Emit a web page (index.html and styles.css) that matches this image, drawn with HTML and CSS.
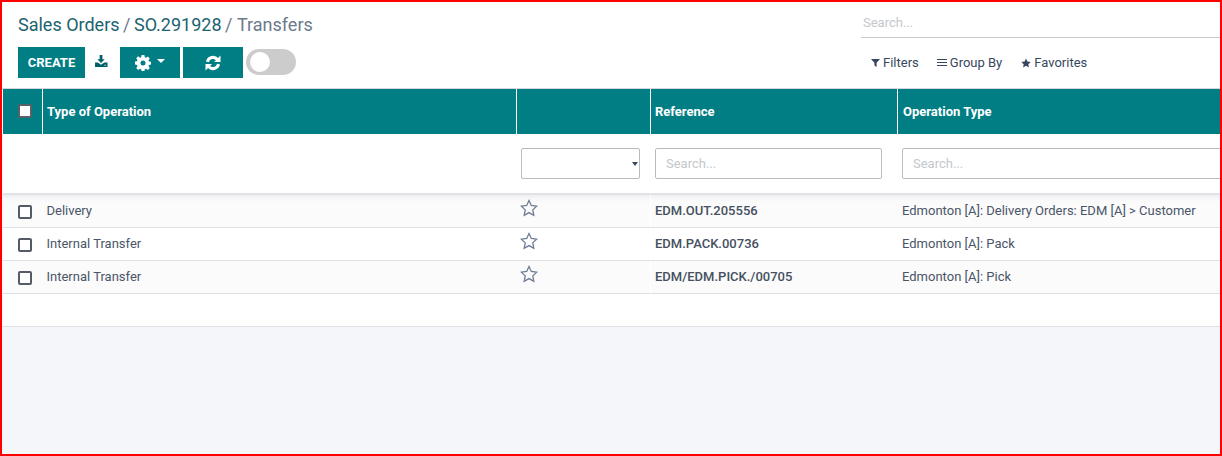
FILE: index.html
```html
<!DOCTYPE html>
<html lang="en">
<head>
<meta charset="utf-8">
<title>Transfers</title>
<link rel="stylesheet" href="styles.css">
</head>
<body>
<div class="frame">
  <header class="panel">
    <div class="panel-left">
      <h1 class="crumbs"><span class="crumb-link">Sales Orders</span> <span class="crumb-sep">/</span> <span class="crumb-link">SO.291928</span> <span class="crumb-sep">/</span> <span class="crumb-active">Transfers</span></h1>
      <div class="actions">
        <button class="btn btn-create">CREATE</button>
        <button class="icon-btn" aria-label="Import">
          <svg width="13" height="12" viewBox="0 0 14 13"><path fill="#00606a" d="M5 0h3v4.500h2.500L6.500 8.700 2.500 4.500H5zM0 8h3l3.500 2.500L10 8h3.500v5H0z"/><path fill="#fff" d="M10 10.600h2v.8h-2z"/></svg>
        </button>
        <button class="btn btn-gear" aria-label="Action">
          <svg width="16" height="16" viewBox="0 0 16 16"><path fill="#fff" fill-rule="evenodd" d="M6.600 0h2.800l.4 2.200 1.200.5L12.800 1.400l2 2-1.300 1.800.5 1.200 2 .4v2.800l-2 .4-.5 1.200 1.300 1.800-2 2-1.800-1.300-1.200.5-.4 2.200H6.600l-.4-2.200-1.200-.5-1.800 1.300-2-2 1.300-1.800-.5-1.200-2-.4V6.600l2-.4.500-1.200-1.300-1.800 2-2L5 2.700l1.200-.5zM8 5.500a2.500 2.500 0 1 0 0 5 2.500 2.500 0 0 0 0-5z"/></svg>
          <span class="caret"></span>
        </button>
        <button class="btn btn-refresh" aria-label="Refresh">
          <svg width="16" height="16" viewBox="0 0 16 16"><path fill="none" stroke="#fff" stroke-width="3" d="M2.400 6.800A5.800 5.800 0 0 1 12.400 4.400M13.600 9.200A5.800 5.800 0 0 1 3.600 11.600"/><path fill="#fff" d="M15.500 .5v6.500H9zM.5 15.500V9H7z"/></svg>
        </button>
        <span class="toggle"><span class="knob"></span></span>
      </div>
    </div>
    <div class="panel-right">
      <div class="search-box">Search...</div>
      <div class="filters">
        <span class="filter">
          <svg width="9" height="9" viewBox="0 0 9 9"><path fill="#374760" d="M0 1h9L5.600 4.700V9L3.400 7.600V4.700z"/></svg>Filters</span>
        <span class="filter">
          <svg width="10" height="9" viewBox="0 0 10 9"><path fill="#374760" d="M0 1h10v1H0zM0 4h10v1H0zM0 7h10v1H0z"/></svg>Group By</span>
        <span class="filter">
          <svg width="10" height="10" viewBox="0 0 24 24"><path fill="#374760" d="M12 1l3.400 7.300 7.900 1-5.800 5.400 1.500 7.900-7-3.900-7 3.900 1.500-7.900L.7 9.300l7.900-1z"/></svg>Favorites</span>
      </div>
    </div>
  </header>
  <div class="content">
    <table class="list">
      <colgroup>
        <col class="c-check"><col class="c-type"><col class="c-fav"><col class="c-ref"><col class="c-op">
      </colgroup>
      <thead>
        <tr class="head">
          <th class="check-cell"><span class="check check-head"></span></th>
          <th>Type of Operation</th>
          <th></th>
          <th>Reference</th>
          <th class="last">Operation Type</th>
        </tr>
        <tr class="search-row">
          <td></td>
          <td></td>
          <td><div class="field field-select"><span class="select-caret"></span></div></td>
          <td><div class="field field-ref">Search...</div></td>
          <td><div class="field field-wide">Search...</div></td>
        </tr>
      </thead>
      <tbody>
        <tr class="row odd first">
          <td class="check-cell"><span class="check"></span></td>
          <td class="type">Delivery</td>
          <td class="fav"><svg width="18" height="18" viewBox="0 0 24 24"><path fill="none" stroke="#6c7a92" stroke-width="1.700" d="M12 2l3.100 6.600 7.200.9-5.300 5 1.400 7.200-6.400-3.600-6.400 3.600L7 14.500l-5.300-5 7.200-.9z"/></svg></td>
          <td class="ref">EDM.OUT.205556</td>
          <td class="last">Edmonton [A]: Delivery Orders: EDM [A] &gt; Customer</td>
        </tr>
        <tr class="row">
          <td class="check-cell"><span class="check"></span></td>
          <td class="type">Internal Transfer</td>
          <td class="fav"><svg width="18" height="18" viewBox="0 0 24 24"><path fill="none" stroke="#6c7a92" stroke-width="1.700" d="M12 2l3.100 6.600 7.200.9-5.300 5 1.400 7.200-6.400-3.600-6.400 3.600L7 14.500l-5.300-5 7.200-.9z"/></svg></td>
          <td class="ref">EDM.PACK.00736</td>
          <td class="last">Edmonton [A]: Pack</td>
        </tr>
        <tr class="row odd">
          <td class="check-cell"><span class="check"></span></td>
          <td class="type">Internal Transfer</td>
          <td class="fav"><svg width="18" height="18" viewBox="0 0 24 24"><path fill="none" stroke="#6c7a92" stroke-width="1.700" d="M12 2l3.100 6.600 7.200.9-5.300 5 1.400 7.200-6.400-3.600-6.400 3.600L7 14.500l-5.300-5 7.200-.9z"/></svg></td>
          <td class="ref">EDM/EDM.PICK./00705</td>
          <td class="last">Edmonton [A]: Pick</td>
        </tr>
        <tr class="row empty"><td></td><td></td><td></td><td></td><td></td></tr>
      </tbody>
    </table>
  </div>
</div>
</body>
</html>
```

FILE: styles.css
```css
* { box-sizing: border-box; }
html, body { margin: 0; height: 100%; }
body { font-family: Roboto, "Noto Sans", sans-serif; color: #374760; overflow: hidden; }

.frame {
  width: 1222px;
  height: 456px;
  border: 2px solid #f00;
  background: #f5f6fa;
  display: flex;
  flex-direction: column;
  overflow: hidden;
}

.panel {
  height: 87px;
  flex: none;
  background: #fff;
  border-bottom: 1px solid #d6d6da;
  display: flex;
  justify-content: space-between;
}
.panel-left { padding: 12px 0 0 16px; }
.crumbs {
  margin: 0;
  font-size: 18px;
  font-weight: 400;
  line-height: 22px;
  height: 33px;
  white-space: nowrap;
  word-spacing: -1px;
}
.crumb-link { color: #1b6370; word-spacing: 0; }
.crumb-sep, .crumb-active { color: #6c7a8c; }
.crumb-active { margin-left: 1px; }

.actions { display: flex; align-items: flex-start; }
.btn {
  height: 31px;
  border: 0;
  padding: 0;
  background: #017e84;
  color: #fff;
  font-family: inherit;
  display: flex;
  align-items: center;
  justify-content: center;
}
.btn-create { width: 67px; font-size: 13px; font-weight: 700; }
.icon-btn {
  width: 35px;
  height: 31px;
  border: 0;
  padding: 0 2px 3px 0;
  background: none;
  display: flex;
  align-items: center;
  justify-content: center;
}
.btn-gear { width: 60px; gap: 6px; }
.btn-refresh { width: 60px; margin-left: 3px; }
.caret {
  border-left: 4px solid transparent;
  border-right: 4px solid transparent;
  border-top: 4px solid #fff;
  margin-top: -3px;
}
.toggle {
  width: 50px;
  height: 26px;
  margin: 2px 0 0 3px;
  border-radius: 13px;
  background: #ccc;
  padding: 3px 0 0 4px;
}
.knob { display: block; width: 20px; height: 20px; border-radius: 50%; background: #fff; }

.panel-right { width: 359px; padding-top: 11px; }
.search-box {
  height: 25px;
  border-bottom: 1px solid #c9ccd2;
  padding: 2px 0 0 2px;
  font-size: 13px;
  line-height: 15px;
  color: #c4c7cc;
}
.filters { display: flex; gap: 18px; padding: 16px 0 0 10px; }
.filter {
  display: flex;
  align-items: center;
  gap: 3px;
  font-size: 13px;
  line-height: 17px;
  color: #374760;
}
.filter:last-child { margin-left: 1px; }

.content { flex: 1; overflow: hidden; }
.list {
  width: 1240px;
  margin-left: 1px;
  table-layout: fixed;
  border-collapse: separate;
  border-spacing: 0;
  font-size: 13px;
}
.c-check { width: 39px; }
.c-type { width: 474px; }
.c-fav { width: 134px; }
.c-ref { width: 247px; }

.head th {
  height: 45px;
  padding: 0 4px;
  background: #017e84;
  color: #fff;
  font-size: 13px;
  font-weight: 700;
  text-align: left;
  border-left: 1px solid #fff;
}
.head th:first-child { border-left: 0; }
.head th.check-cell { padding: 0; text-align: center; }
.head th.last, .row td.last { padding-left: 5px; }

.search-row td {
  height: 61px;
  background: #fff;
  padding: 1px 4px 2px 5px;
  border-bottom: 2px solid #e2e3e8;
}

.field {
  height: 31px;
  border: 1px solid #b9bbbe;
  border-radius: 2px;
  padding: 0 10px;
  line-height: 29px;
  font-size: 13px;
  color: #c4c7cc;
  background: #fff;
}
.field-select { width: 119px; position: relative; }
.select-caret {
  position: absolute;
  right: 1px;
  top: 13px;
  border-left: 3px solid transparent;
  border-right: 3px solid transparent;
  border-top: 4px solid #374760;
}
.field-ref { width: 227px; }
.field-wide { width: 330px; }

.row td {
  height: 33px;
  padding: 0 4px 1px;
  border-bottom: 1px solid #dee0e3;
  background: #fff;
  color: #4a5568;
  white-space: nowrap;
}
.row.odd td { background: #fbfbfb; }
.row.first td { background: linear-gradient(#eeeef1, #f8f8fa 4px, #fbfbfb 8px); }
.row td.type { padding-left: 4.5px; }
.row td.check-cell { padding: 0; text-align: center; }
.row td.ref { font-weight: 500; color: #455060; border-left: 1px solid #fff; }
.row td.fav { padding-bottom: 6px; }
.fav svg { display: block; }
.row.empty td { background: #fff; }

.check {
  display: inline-block;
  width: 14px;
  height: 14px;
  margin: 0 0 0 5px;
  border: 2px solid #555b66;
  border-radius: 2px;
  background: #fff;
  vertical-align: middle;
}
.check-head { margin-bottom: 2px; border-color: #5b5f69; }
```
